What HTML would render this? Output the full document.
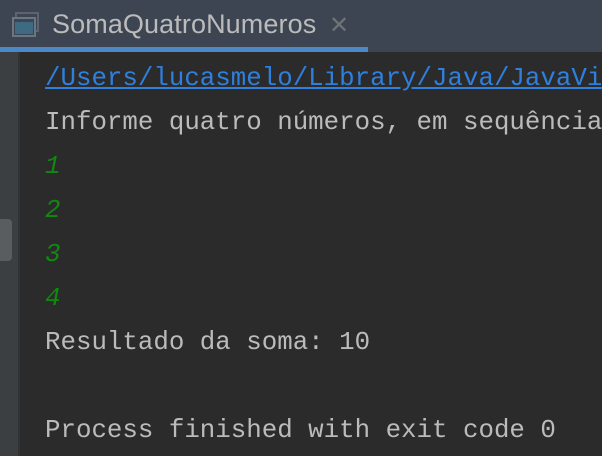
<!DOCTYPE html>
<html><head><style>
body{margin:0;width:602px;height:456px;overflow:hidden;background:#2b2b2b;position:relative;font-family:"Liberation Mono",monospace}
.tabbar{position:absolute;left:0;top:0;width:602px;height:52px;background:#3d4552}
.ul{position:absolute;left:0;top:47px;width:368px;height:5px;background:#4a88c7}
.tab{position:absolute;left:52px;top:9px;font:27px "Liberation Sans",sans-serif;color:#bbbbbb;letter-spacing:0.1px}
.x{position:absolute;left:329px;top:11px;font:24px "Liberation Sans",sans-serif;color:#6e7378}
.gut{position:absolute;left:0;top:52px;width:18px;height:404px;background:#3c3f41}
.sep{position:absolute;left:18px;top:52px;width:2px;height:404px;background:#313335}
.btn{position:absolute;left:0;top:219px;width:12px;height:42px;background:#5a5d60;border-radius:0 4px 4px 0}
.l{position:absolute;left:45px;font-size:25.8px;color:#bbbbbb;white-space:pre;line-height:30px}
.a{color:#2f7fdc;text-decoration:underline}
.g{color:#0f8a0f;font-style:italic}
</style></head><body>
<div class="tabbar"></div>
<svg style="position:absolute;left:12px;top:12px" width="28" height="26"><rect x="4" y="1" width="22" height="18" fill="none" stroke="#5d6470" stroke-width="2"/><rect x="1" y="6" width="22" height="18" fill="#3d4552" stroke="#6b7683" stroke-width="2"/><rect x="3" y="10" width="18" height="12" fill="#3f6b82"/></svg>
<div class="tab">SomaQuatroNumeros</div>
<div class="x">✕</div>
<div class="ul"></div>
<div class="gut"></div><div class="sep"></div><div class="btn"></div>
<div class="l a" style="top:64px">/Users/lucasmelo/Library/Java/JavaVi</div>
<div class="l" style="top:108px">Informe quatro números, em sequência</div>
<div class="l g" style="top:152px">1</div>
<div class="l g" style="top:196px">2</div>
<div class="l g" style="top:240px">3</div>
<div class="l g" style="top:284px">4</div>
<div class="l" style="top:328px">Resultado da soma: 10</div>
<div class="l" style="top:416px">Process finished with exit code 0</div>
</body></html>
